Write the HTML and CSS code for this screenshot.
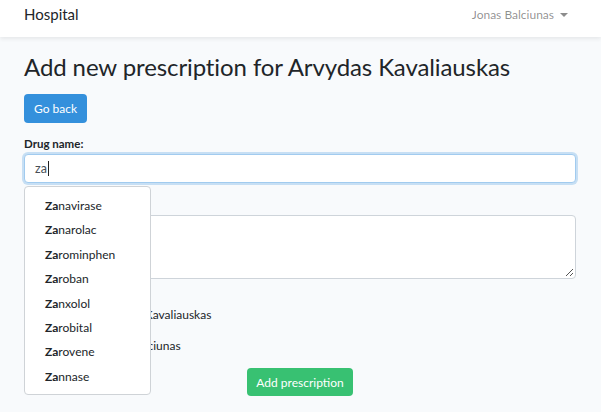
FILE: index.html
```html
<!DOCTYPE html>
<html>
<head>
<meta charset="utf-8">
<link rel="stylesheet" href="styles.css">
</head>
<body>
<nav class="navbar">
  <div class="nav-inner">
    <span class="brand">Hospital</span>
    <span class="user">Jonas Balciunas <span class="caret"></span></span>
  </div>
</nav>
<main class="container">
  <h1 class="title">Add new prescription for Arvydas Kavaliauskas</h1>
  <button class="btn btn-blue">Go back</button>
  <form class="form">
    <div class="field">
      <label class="label">Drug name:</label>
      <div class="input-wrap">
        <div class="input focus">za<span class="cursor"></span></div>
        <ul class="dropdown">
          <li><b>Za</b>navirase</li>
          <li><b>Za</b>narolac</li>
          <li><b>Za</b>rominphen</li>
          <li><b>Za</b>roban</li>
          <li><b>Za</b>nxolol</li>
          <li><b>Za</b>robital</li>
          <li><b>Za</b>rovene</li>
          <li><b>Za</b>nnase</li>
        </ul>
      </div>
    </div>
    <div class="field">
      <label class="label">Instructions:</label>
      <div class="textarea"><span class="grip"></span></div>
    </div>
    <p class="line line-first">Patient name: Arvydas Kavaliauskas</p>
    <p class="line">Doctor name: Jonas Balciunas</p>
    <div class="actions">
      <button class="btn btn-green">Add prescription</button>
    </div>
  </form>
</main>
</body>
</html>
```
FILE: styles.css
```css
* { box-sizing: border-box; }
html, body { margin: 0; padding: 0; }
body {
  background: #f8fafc;
  font-family: Lato, "Noto Sans", sans-serif;
  color: #212529;
  font-size: 12px;
}
.navbar {
  background: #fff;
  height: 37px;
  box-shadow: 0 2px 4px rgba(0,0,0,0.075);
}
.nav-inner {
  height: 100%;
  padding: 5px 33px 0 24px;
  display: flex;
  align-items: flex-start;
  justify-content: space-between;
}
.brand { font-size: 15px; line-height: 18px; color: #212529; }
.user {
  font-size: 12px;
  line-height: 18px;
  margin-top: 1px;
  color: rgba(0,0,0,0.45);
  display: flex;
  align-items: center;
  gap: 6px;
}
.caret {
  display: inline-block;
  width: 0; height: 0;
  border-left: 4px solid transparent;
  border-right: 4px solid transparent;
  border-top: 4px solid rgba(0,0,0,0.45);
}
.container { padding: 0 25px 0 24px; }
.title {
  font-weight: 400;
  font-size: 24px;
  letter-spacing: -0.1px;
  line-height: 30px;
  white-space: nowrap;
  margin: 15px 0 12px;
  color: #212529;
}
.btn {
  border: none;
  border-radius: 4px;
  color: #fff;
  font-family: inherit;
  font-size: 12px;
  height: 29px;
  padding: 0;
  cursor: pointer;
}
.btn-blue { background: #3490dc; width: 63px; display: block; }
.btn-green { background: #38c172; width: 106px; height: 28px; }
.form { margin-top: 14px; }
.field { display: flex; flex-direction: column; gap: 3px; margin-bottom: 15px; }
.label { font-weight: 700; font-size: 11.5px; line-height: 14px; }
.input-wrap { position: relative; }
.input {
  height: 29px;
  background: #fff;
  border: 1px solid #a1cbef;
  border-radius: 4px;
  box-shadow: 0 0 0 2px rgba(52,144,220,0.25);
  padding: 0 10px;
  display: flex;
  align-items: center;
  font-size: 12.5px;
  color: #495057;
}
.cursor { display: inline-block; width: 1px; height: 15px; background: #222; margin-left: 1px; }
.dropdown {
  position: absolute;
  top: 32px;
  left: 0;
  width: 127px;
  margin: 0;
  padding: 7px 0 5px;
  list-style: none;
  background: #fff;
  border: 1px solid #cfd3d7;
  border-radius: 4px;
  z-index: 5;
}
.dropdown li {
  height: 24.4px;
  line-height: 24.4px;
  padding-left: 20px;
  font-size: 12px;
  color: #212529;
}
.dropdown b { font-weight: 700; }
.textarea {
  position: relative;
  height: 64px;
  background: #fff;
  border: 1px solid #ced4da;
  border-radius: 4px;
}
.grip {
  position: absolute;
  right: 2px; bottom: 2px;
  width: 7px; height: 7px;
  background: linear-gradient(135deg, transparent 45%, #555 45%, #555 55%, transparent 55%, transparent 75%, #555 75%, #555 85%, transparent 85%);
}
.line { margin: 0 0 17px; font-size: 12px; line-height: 14px; }
.line-first { margin-top: 29px; }
.actions { display: flex; justify-content: center; margin-top: -2px; }
```
